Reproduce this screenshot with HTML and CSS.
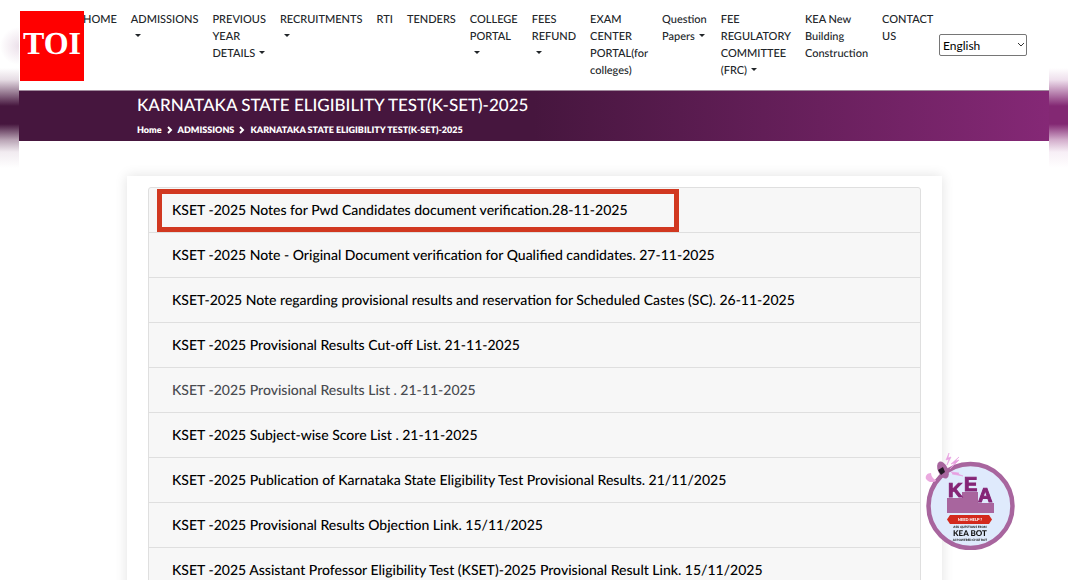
FILE: index.html
```html
<!DOCTYPE html>
<html lang="en">
<head>
<meta charset="utf-8">
<meta name="viewport" content="width=device-width, initial-scale=1">
<title>Karnataka State Eligibility Test (K-SET) 2025</title>
<link rel="stylesheet" href="styles.css">
</head>
<body>
<div class="frame">
  <div class="side side-left"></div>
  <div class="page">
    <header class="topbar">
      <nav class="menu">
        <a href="#">HOME</a>
        <a href="#">ADMISSIONS<br><span class="caret"></span></a>
        <a href="#">PREVIOUS<br>YEAR<br>DETAILS<span class="caret"></span></a>
        <a href="#">RECRUITMENTS<br><span class="caret"></span></a>
        <a href="#">RTI</a>
        <a href="#">TENDERS</a>
        <a href="#">COLLEGE<br>PORTAL<br><span class="caret"></span></a>
        <a href="#">FEES<br>REFUND<br><span class="caret"></span></a>
        <a href="#">EXAM<br>CENTER<br>PORTAL(for<br>colleges)</a>
        <a href="#">Question<br>Papers<span class="caret"></span></a>
        <a href="#">FEE<br>REGULATORY<br>COMMITTEE<br>(FRC)<span class="caret"></span></a>
        <a href="#">KEA New<br>Building<br>Construction</a>
        <a href="#">CONTACT<br>US</a>
      </nav>
      <div class="language">
        <select aria-label="Language"><option>English</option></select>
        <svg class="chevron" viewBox="0 0 8 6" aria-hidden="true"><path d="M1 1l3 3 3-3" fill="none" stroke="#333" stroke-width="1"/></svg>
      </div>
    </header>
    <section class="banner">
      <h1>KARNATAKA STATE ELIGIBILITY TEST(K-SET)-2025</h1>
      <nav class="crumbs" aria-label="Breadcrumb">
        <a href="#">Home</a>
        <svg viewBox="0 0 6 8" aria-hidden="true"><path d="M1 1l3 3-3 3" fill="none" stroke="#fff" stroke-width="2"/></svg>
        <a href="#">ADMISSIONS</a>
        <svg viewBox="0 0 6 8" aria-hidden="true"><path d="M1 1l3 3-3 3" fill="none" stroke="#fff" stroke-width="2"/></svg>
        <span>KARNATAKA STATE ELIGIBILITY TEST(K-SET)-2025</span>
      </nav>
    </section>
    <main class="card">
      <ul class="notices">
        <li><a href="#">KSET -2025 Notes for Pwd Candidates document verification.28-11-2025</a><span class="marker"></span></li>
        <li><a href="#">KSET -2025 Note - Original Document verification for Qualified candidates. 27-11-2025</a></li>
        <li><a href="#">KSET-2025 Note regarding provisional results and reservation for Scheduled Castes (SC). 26-11-2025</a></li>
        <li><a href="#">KSET -2025 Provisional Results Cut-off List. 21-11-2025</a></li>
        <li><a class="hovered" href="#">KSET -2025 Provisional Results List . 21-11-2025</a></li>
        <li><a href="#">KSET -2025 Subject-wise Score List . 21-11-2025</a></li>
        <li><a href="#">KSET -2025 Publication of Karnataka State Eligibility Test Provisional Results. 21/11/2025</a></li>
        <li><a href="#">KSET -2025 Provisional Results Objection Link. 15/11/2025</a></li>
        <li><a href="#">KSET -2025 Assistant Professor Eligibility Test (KSET)-2025 Provisional Result Link. 15/11/2025</a></li>
      </ul>
    </main>
  </div>
  <div class="side side-right"></div>
</div>
<div class="toi">TOI</div>
<a class="bot" href="#" aria-label="KEA Bot">
  <svg viewBox="0 0 100 100">
    <circle cx="50.500" cy="56" r="42" fill="#dfeafc" stroke="#a8659e" stroke-width="4.500"/>
    <path d="M27 48h15v-6h16v11h16v10H27z" fill="#a8659e"/>
    <g class="bot-letters" fill="#852576" stroke="#852576" stroke-width="1">
      <text x="28" y="47">K</text><text x="44" y="41">E</text><text x="58" y="52">A</text>
    </g>
    <path d="M30 65h39l3 4.500-3 4.500H30l-3-4.500z" fill="#d3291d"/>
    <text class="bot-help" x="50" y="71">NEED HELP ?</text>
    <text class="bot-tiny" x="50" y="78">ASK QUESTIONS FROM</text>
    <text class="bot-name" x="50" y="86">KEA BOT</text>
    <text class="bot-tiny" x="50" y="91">AI POWERED CHAT BOT</text>
    <ellipse cx="23" cy="20" rx="5" ry="9" transform="rotate(-25 23 20)" fill="#a8659e"/>
    <path d="M18 20l5-3 2 5-4 3z" fill="#241a26"/>
    <path d="M12 32l11-5-4 4z" fill="#a8659e"/>
    <path d="M11 23c-4 0-6 3-5 6 3 4 6 3 7 3 2 0 3-1 3-2-3-1-5-4-5-7z" fill="#eba9df"/>
    <path d="M29 3l-3 7 3-1-2 6 4-8-3 1zM39 7l-8 7 4-1-5 6 9-9-4 1zM31 22l8 1-1 1 5 2-11-2 1-1z" fill="#e8a0e0" stroke="#e8a0e0" stroke-width=".6"/>
  </svg>
</a>
</body>
</html>
```
FILE: styles.css
```css
* { box-sizing: border-box; }
body {
  margin: 0;
  font-family: Lato, "Liberation Sans", sans-serif;
  text-rendering: geometricPrecision;
  color: #212529;
  background: #fff;
}
a { color: inherit; text-decoration: none; }

.frame { display: flex; height: 100vh; overflow: hidden; }
.side { flex: 0 0 19px; }
.side-left {
  background:
    radial-gradient(circle 19px at 19px 46px, #ece0ea, transparent),
    linear-gradient(#fff 68px, #e5dbe3 80px, #46163e 106px, #46163e 124px, #b9a4b5 140px, #f1ebf0 152px, #fff 168px);
}
.side-right {
  background: linear-gradient(#fff 68px, #eedfec 80px, #832873 106px, #832873 124px, #d3aecc 140px, #f7eff6 152px, #fff 168px);
}
.page { flex: 1; min-width: 0; }

.topbar { display: flex; justify-content: space-between; padding: 11px 22px 11px 64px; }
.menu { display: flex; gap: 14px; font-size: 11px; font-weight: 500; line-height: 17px; white-space: nowrap; }
.caret {
  display: inline-block;
  margin-left: 4px;
  vertical-align: 3px;
  border: 3px solid transparent;
  border-top-color: #212529;
  border-bottom: 0;
}
.language { position: relative; align-self: flex-start; margin-top: 23px; }
.language select {
  display: block;
  width: 88px;
  height: 22px;
  padding: 0 3px;
  appearance: none;
  border: 1px solid #767676;
  border-radius: 2px;
  background: #fff;
  color: #000;
  font: 12px Lato, sans-serif;
}
.chevron { position: absolute; right: 2px; top: 8px; width: 8px; height: 6px; pointer-events: none; }

.banner {
  height: 51px;
  padding: 4px 118px 0;
  color: #fff;
  border-top: 1px solid #a08a9c;
  background: linear-gradient(90deg, #46163e 50%, #852876);
}
.banner h1 { margin: 0; font-size: 17px; line-height: 20px; font-weight: 500; }
.crumbs { display: flex; align-items: center; gap: 5px; margin-top: 9px; font-size: 9px; line-height: 12px; font-weight: 800; }
.crumbs svg { width: 6px; height: 8px; }

.card {
  margin: 35px 107px 0 108px;
  padding: 11px 21px;
  background: #fff;
  box-shadow: 0 0 12px rgba(0, 0, 0, .12);
}
.notices {
  margin: 0;
  padding: 0;
  list-style: none;
  border: 1px solid #dfdfdf;
  border-radius: 3px;
  background: #f7f7f7;
}
.notices li { position: relative; height: 45px; padding: 0 23px; border-bottom: 1px solid #dfdfdf; font-size: 14px; font-weight: 500; line-height: 44px; color: #000; }
.hovered { color: #494b50; }
.marker { position: absolute; left: 8px; top: 1px; width: 522px; height: 43px; border: 5px solid #d13820; }

.toi {
  position: absolute;
  left: 20px;
  top: 11px;
  width: 64px;
  height: 70px;
  background: #f00;
  color: #fff;
  font: 700 32px/64px "Liberation Serif", serif;
  text-align: center;
}
.bot { position: fixed; right: 48px; bottom: 30px; width: 100px; height: 100px; }
.bot svg { display: block; width: 100%; height: 100%; }
.bot text { font-family: Lato, sans-serif; font-weight: 900; text-anchor: middle; }
.bot .bot-letters text { font-family: "Liberation Sans", sans-serif; font-size: 20px; font-weight: 700; text-anchor: start; }
.bot .bot-help { font-size: 4px; fill: #fff; }
.bot .bot-tiny { font-size: 3px; fill: #111; }
.bot .bot-name { font-size: 8px; fill: #111; }
```
